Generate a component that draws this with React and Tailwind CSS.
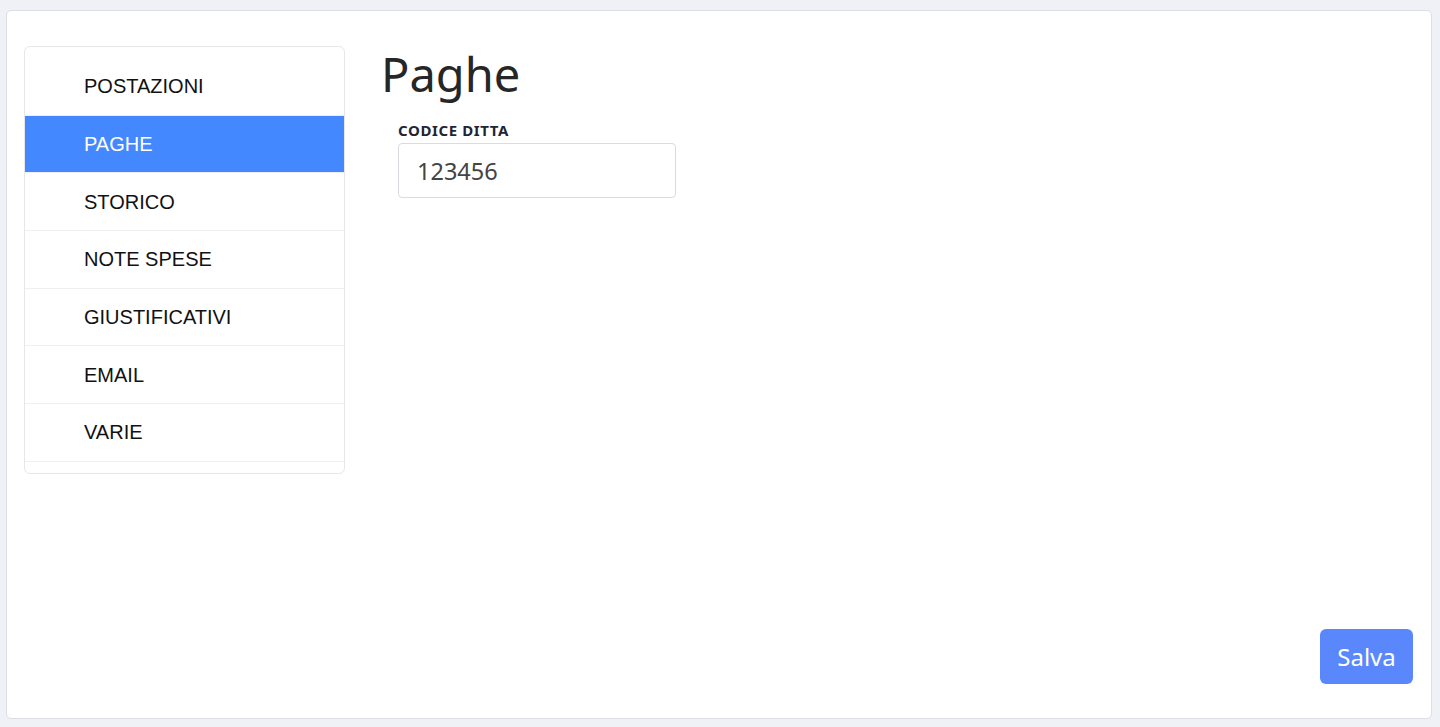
import React, { useState } from 'react';

const sections = ['POSTAZIONI', 'PAGHE', 'STORICO', 'NOTE SPESE', 'GIUSTIFICATIVI', 'EMAIL', 'VARIE'];

const App = () => {
    const [active, setActive] = useState('PAGHE');
    const [codice, setCodice] = useState('123456');

    return (
        <div className="h-screen bg-[#f0f1f7] pt-[10px] pr-[8px] pb-[8px] pl-[6px]">
            <div className="h-full flex flex-col bg-white border border-[#dcdde6] rounded-[5px] pt-[35px] pl-[17px] pr-[18px] pb-[34px]">
                <div className="flex flex-1 gap-8 items-start">
                    <nav className="w-[321px] shrink-0 border border-[#e5e7eb] rounded-[6px] py-[11px] overflow-hidden">
                        {sections.map((s) => (
                            <button
                                key={s}
                                onClick={() => setActive(s)}
                                className={`w-full h-[57.7px] flex items-center pl-[59px] text-left text-[20px] font-['Liberation_Sans',Arial,sans-serif] border-b border-[#efefef] ${
                                    active === s ? 'bg-[#4388ff] text-white border-[#4388ff]' : 'text-[#111111]'
                                }`}
                            >
                                {s}
                            </button>
                        ))}
                    </nav>
                    <main className="flex-1 font-['Noto_Sans',sans-serif]">
                        <h1 className="mt-[5px] ml-[4px] text-[47px] leading-none text-[#262626]">Paghe</h1>
                        <div className="ml-[21px] mt-[25px]">
                            <label className="block text-[15px] leading-none font-bold text-[#1f2533] tracking-[0.6px]">CODICE DITTA</label>
                            <input
                                value={codice}
                                onChange={(e) => setCodice(e.target.value)}
                                className="mt-[5px] w-[278px] h-[55px] border border-[#d8dbe0] rounded-[4px] px-[18px] text-[23.5px] text-[#444444] outline-none font-['Noto_Sans',sans-serif]"
                            />
                        </div>
                    </main>
                </div>
                <div className="flex justify-end">
                    <button className="w-[93px] h-[55px] bg-[#5a88fc] text-white rounded-[6px] text-[24px] font-['Noto_Sans',sans-serif]">
                        Salva
                    </button>
                </div>
            </div>
        </div>
    );
};

export default App;
